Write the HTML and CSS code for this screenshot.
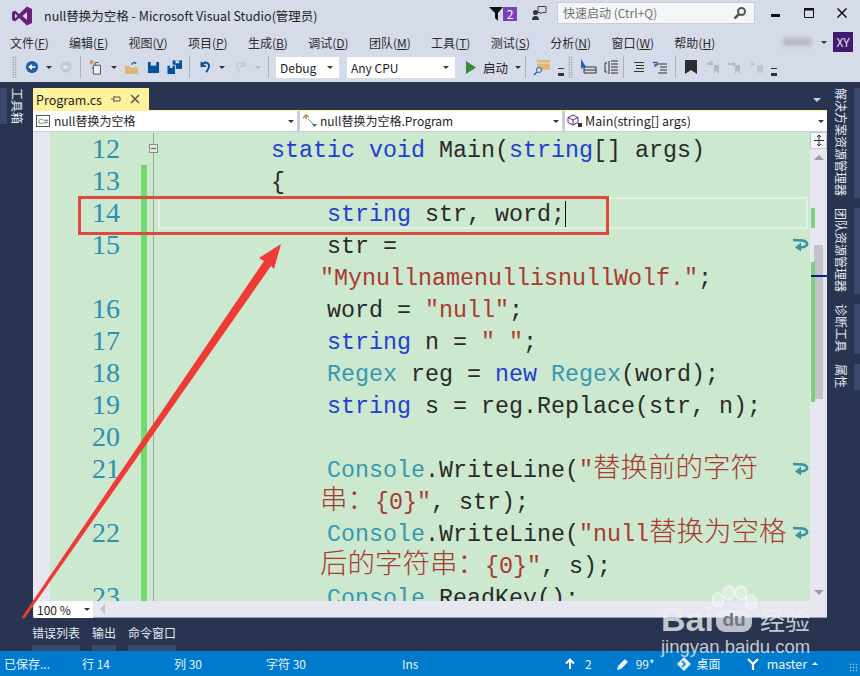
FILE: index.html
```html
<!DOCTYPE html>
<html lang="zh-CN">
<head>
    <meta charset="UTF-8">
    <title>null替换为空格 - Microsoft Visual Studio</title>
    <link rel="stylesheet" href="styles.css">
</head>
<body>
    <!-- Title bar -->
    <div class="titlebar">
        <svg class="vs-logo" width="22" height="20" viewBox="0 0 22 20"><path d="M1 6 L4 4.500 L8 8 L16 0.500 L21 3 L21 17 L16 19.500 L8 12 L4 15.500 L1 14 Z M4 7.500 L4 12.500 L6.500 10 Z M16 6 L11.500 10 L16 14 Z" fill="#68217a" fill-rule="evenodd"/></svg>
        <span class="title">null替换为空格 - Microsoft Visual Studio(管理员)</span>
        <svg class="filter" width="14" height="14" viewBox="0 0 14 14"><path d="M0 0 L14 0 L9 6 L9 14 L6 11 L6 6 Z" fill="#111"/></svg>
        <span class="badge">2</span>
        <svg class="feedback" width="16" height="16" viewBox="0 0 16 16"><circle cx="4.500" cy="7.500" r="2.500" fill="#333"/><path d="M1 15 Q1 11 4.500 11 Q8 11 8 15 Z" fill="#333"/><path d="M7 1.500 H15 V7.500 H11 L9.500 9 V7.500 H7 Z" fill="none" stroke="#444"/></svg>
        <div class="quick"><span>快速启动 (Ctrl+Q)</span>
            <svg width="14" height="14" viewBox="0 0 14 14"><circle cx="8.500" cy="5.500" r="3.500" fill="none" stroke="#555" stroke-width="2"/><path d="M6 8 L1.500 12.500" stroke="#555" stroke-width="2.500"/></svg>
        </div>
        <div class="winctl">
            <svg width="10" height="10" viewBox="0 0 10 10"><rect x="0" y="6" width="9" height="3" fill="#111"/></svg>
            <svg width="10" height="10" viewBox="0 0 10 10"><path d="M0.500 1 H9.500 V9.500 H0.500 Z" fill="none" stroke="#111"/><rect y="0" width="10" height="2.500" fill="#111"/></svg>
            <svg width="10" height="10" viewBox="0 0 10 10"><path d="M0.500 0.500 L9.500 9.500 M9.500 0.500 L0.500 9.500" stroke="#111" stroke-width="1.500"/></svg>
        </div>
    </div>

    <!-- Menu -->
    <div class="menubar">
        <span class="menu">文件(<u>F</u>)</span>
        <span class="menu">编辑(<u>E</u>)</span>
        <span class="menu">视图(<u>V</u>)</span>
        <span class="menu">项目(<u>P</u>)</span>
        <span class="menu">生成(<u>B</u>)</span>
        <span class="menu">调试(<u>D</u>)</span>
        <span class="menu">团队(<u>M</u>)</span>
        <span class="menu">工具(<u>T</u>)</span>
        <span class="menu">测试(<u>S</u>)</span>
        <span class="menu">分析(<u>N</u>)</span>
        <span class="menu">窗口(<u>W</u>)</span>
        <span class="menu">帮助(<u>H</u>)</span>
        <div class="account">
            <span class="blur"></span>
            <span class="caret dark"></span>
            <span class="avatar">XY</span>
        </div>
    </div>

    <!-- Toolbar -->
    <div class="toolbar">
        <span class="grip"></span>
        <svg class="ml1" width="14" height="14" viewBox="0 0 16 16"><circle cx="8" cy="8" r="7" fill="#1e5fa8"/><path d="M12 8 H6 M8 5.500 L5 8 L8 10.500" stroke="#fff" stroke-width="1.800" fill="none"/></svg>
        <span class="caret dark"></span>
        <svg width="14" height="14" viewBox="0 0 16 16"><circle cx="8" cy="8" r="6.500" fill="#c4c8d2"/><path d="M11 8 H6 M8 6 L5.500 8 L8 10" stroke="#e8eaf2" stroke-width="1.500" fill="none"/></svg>
        <span class="sep"></span>
        <svg width="16" height="16" viewBox="0 0 18 18"><path d="M6 7 H14 V17 H6 Z M4 10 H6 M8 7 V4 H12" fill="#eef0f6" stroke="#444"/><path d="M4 1 V6 M1.500 3.500 H6.500 M2 1.500 L6 5.500 M6 1.500 L2 5.500" stroke="#c9932b"/></svg>
        <span class="caret dark"></span>
        <svg width="15" height="15" viewBox="0 0 16 16"><path d="M1 6 H6 L7 8 H15 V15 H1 Z" fill="#dcb67a"/><path d="M8 5 Q10 1 13 4" stroke="#1e5fa8" stroke-width="1.500" fill="none"/></svg>
        <svg class="ml1" width="13" height="13" viewBox="0 0 14 14"><path d="M1 1 H13 V13 H1 Z" fill="#00539c"/><rect x="4" y="1" width="6" height="4" fill="#d6dbe9"/></svg>
        <svg width="15" height="15" viewBox="0 0 16 15"><path d="M6 0 H16 V9 H6 Z" fill="#00539c"/><rect x="9" y="0" width="4" height="3" fill="#d6dbe9"/><path d="M0 5 H9 V15 H0 Z" fill="#00539c" stroke="#d6dbe9"/><rect x="3" y="5" width="3" height="3" fill="#d6dbe9"/></svg>
        <span class="sep"></span>
        <svg class="ml1" width="14" height="16" viewBox="0 0 16 16"><path d="M4 2 V7 H9 M4 7 Q7 1.500 11 3.500 Q15 6 9.500 14" fill="none" stroke="#00539c" stroke-width="2.200"/></svg>
        <span class="caret dark"></span>
        <svg class="ml2" width="14" height="16" viewBox="0 0 16 16"><path d="M12 2 V7 H7 M12 7 Q9 1.500 5 3.500 Q1 6 6.500 14" fill="none" stroke="#c4c8d2" stroke-width="2"/></svg>
        <span class="caret light"></span>
        <span class="sep"></span>
        <div class="combo debug"><span>Debug</span><i class="caret dark"></i></div>
        <div class="combo cpu"><span>Any CPU</span><i class="caret dark"></i></div>
        <svg class="play" width="10" height="13" viewBox="0 0 10 13"><path d="M0 0 L10 6.500 L0 13 Z" fill="#388a34"/></svg>
        <span class="start">启动</span>
        <span class="caret dark"></span>
        <span class="sep mln3"></span>
        <svg width="18" height="18" viewBox="0 0 18 18"><path d="M4 2 H17 V12 H4 Z" fill="#dcb67a"/><path d="M4 5 H17" stroke="#f5e2c0"/><circle cx="6" cy="12" r="2.500" fill="#cfe3f4" stroke="#1e5fa8"/><path d="M4 14 L1 17" stroke="#1e5fa8" stroke-width="1.500"/></svg>
        <span class="more"></span>
        <span class="grip mln3"></span>
        <svg width="17" height="17" viewBox="0 0 17 17"><path d="M1 0 L1 10 L3.500 8 L6 8 Z" fill="#1e5fa8"/><path d="M4 8 H16 V14 H4 Z M4 11 H16" fill="none" stroke="#333"/></svg>
        <svg width="15" height="15" viewBox="0 0 15 15"><path d="M5 1 V14 M1 3 V12 M1 3 H3 M1 12 H3 M7 1 H14 M7 4 H14 M7 7 H14 M7 10 H14 M7 13 H14" stroke="#333" fill="none"/></svg>
        <span class="sep mln3"></span>
        <svg class="ml2" width="12" height="11" viewBox="0 0 12 11"><path d="M1 .5 H11 M3 3.500 H11 M3 6.500 H11 M1 9.500 H11" stroke="#333"/></svg>
        <svg class="ml1" width="15" height="13" viewBox="0 0 15 13"><path d="M5 3 H14 M7 6 H14 M7 9 H14 M5 12 H14" stroke="#333"/><path d="M0 1.500 H4 V4 H2 V6" stroke="#1e5fa8" fill="none" stroke-width="1.300"/></svg>
        <span class="sep"></span>
        <svg class="ml2" width="12" height="14" viewBox="0 0 12 14"><path d="M0 0 H12 V14 L6 10 L0 14 Z" fill="#2d2d30"/></svg>
        <svg class="ml2" width="14" height="13" viewBox="0 0 14 13"><path d="M7 0 V4 H2 L0 2 M8 4 H13 V13 L10 10 L8 13 Z" fill="#b5bac6"/></svg>
        <svg width="14" height="13" viewBox="0 0 14 13"><path d="M1 2 H6 L6 0 L9 3 L6 6 V4 H1 Z M8 4 H13 V13 L10 10 L8 13 Z" fill="#b5bac6"/></svg>
        <svg class="ml2" width="14" height="13" viewBox="0 0 14 13"><path d="M1 0 L5 3 L1 6 Z M7 4 H13 V13 L10 10 L7 13 Z" fill="#c0c5d0"/></svg>
        <span class="more"></span>
    </div>

    <!-- Main area -->
    <div class="main">
        <div class="side left"><span class="vtab">工具箱</span></div>

        <div class="center">
            <div class="tabstrip">
                <div class="doctab">
                    <span>Program.cs</span>
                    <svg width="10" height="10" viewBox="0 0 10 10"><path d="M0 5 H3 M3 2 V8 M3 3 H9 M3 7 H9 M9 3 V7" stroke="#555" fill="none"/></svg>
                    <svg width="10" height="10" viewBox="0 0 10 10"><path d="M1 1 L9 9 M9 1 L1 9" stroke="#555" stroke-width="1.500"/></svg>
                </div>
                <span class="caret pale"></span>
            </div>
            <div class="document">
                <div class="navbar">
                    <div class="navbox first">
                        <svg width="14" height="12" viewBox="0 0 14 12"><rect x=".5" y=".5" width="13" height="11" fill="#fff" stroke="#555"/><text x="2" y="9" font-size="8" font-family="Liberation Sans" fill="#3b7a3b">C#</text></svg>
                        <span>null替换为空格</span><i class="caret dark"></i>
                    </div>
                    <div class="navbox second">
                        <svg width="16" height="14" viewBox="0 0 16 14"><path d="M1 4 L4 1 L7 3 M4 1 L4 5" stroke="#b58a3a" stroke-width="1.500" fill="none"/><path d="M6 5 L12 11" stroke="#888"/><path d="M10 10 H15 L12.500 13 Z" fill="#2a6f8f"/></svg>
                        <span>null替换为空格.Program</span><i class="caret dark"></i>
                    </div>
                    <div class="navbox third">
                        <svg width="16" height="14" viewBox="0 0 16 14"><path d="M6 1 L11 3.500 V8.500 L6 11 L1 8.500 V3.500 Z M1 3.500 L6 6 L11 3.500 M6 6 V11" fill="none" stroke="#68217a"/><rect x="11" y="9" width="4" height="4" fill="#333"/></svg>
                        <span>Main(string[] args)</span><i class="caret dark"></i>
                    </div>
                </div>

                <div class="editor-wrap">
                    <div class="margin"></div>
                    <div class="editor">
                        <div class="row nobar"><span class="num">12</span><span class="chg"></span><span class="code"><i class="fold"></i>        <b>static void</b> Main(<b>string</b>[] args)</span></div>
                        <div class="row"><span class="num">13</span><span class="chg"></span><span class="code">        {</span></div>
                        <div class="row current"><span class="num">14</span><span class="chg"></span><span class="code">            <b>string</b> str, word;<i class="cursor"></i></span></div>
                        <div class="row"><span class="num">15</span><span class="chg"></span><span class="code">            str =<i class="wrap"><svg width="17" height="14" viewBox="0 0 17 14"><path d="M1 2 L11 2.500 Q16 4 15 7 Q13 9.500 7 9.500" fill="none" stroke="#3a8fa8" stroke-width="2.500"/><path d="M9 4.500 L3 9.500 L9 13.500 Z" fill="#3a8fa8"/></svg></i></span></div>
                        <div class="row"><span class="num"></span><span class="chg"></span><span class="code wrapped"><em>"MynullnamenullisnullWolf."</em>;</span></div>
                        <div class="row"><span class="num">16</span><span class="chg"></span><span class="code">            word = <em>"null"</em>;</span></div>
                        <div class="row"><span class="num">17</span><span class="chg"></span><span class="code">            <b>string</b> n = <em>" "</em>;</span></div>
                        <div class="row"><span class="num">18</span><span class="chg"></span><span class="code">            <s>Regex</s> reg = <b>new</b> <s>Regex</s>(word);</span></div>
                        <div class="row"><span class="num">19</span><span class="chg"></span><span class="code">            <b>string</b> s = reg.Replace(str, n);</span></div>
                        <div class="row"><span class="num">20</span><span class="chg"></span><span class="code"></span></div>
                        <div class="row"><span class="num">21</span><span class="chg"></span><span class="code">            <s>Console</s>.WriteLine(<em>"<span class="cjk">替换前的字符</span></em><i class="wrap"><svg width="17" height="14" viewBox="0 0 17 14"><path d="M1 2 L11 2.500 Q16 4 15 7 Q13 9.500 7 9.500" fill="none" stroke="#3a8fa8" stroke-width="2.500"/><path d="M9 4.500 L3 9.500 L9 13.500 Z" fill="#3a8fa8"/></svg></i></span></div>
                        <div class="row"><span class="num"></span><span class="chg"></span><span class="code wrapped"><em><span class="cjk">串：</span>{0}"</em>, str);</span></div>
                        <div class="row"><span class="num">22</span><span class="chg"></span><span class="code">            <s>Console</s>.WriteLine(<em>"null<span class="cjk">替换为空格</span></em><i class="wrap"><svg width="17" height="14" viewBox="0 0 17 14"><path d="M1 2 L11 2.500 Q16 4 15 7 Q13 9.500 7 9.500" fill="none" stroke="#3a8fa8" stroke-width="2.500"/><path d="M9 4.500 L3 9.500 L9 13.500 Z" fill="#3a8fa8"/></svg></i></span></div>
                        <div class="row"><span class="num"></span><span class="chg"></span><span class="code wrapped"><em><span class="cjk">后的字符串：</span>{0}"</em>, s);</span></div>
                        <div class="row"><span class="num">23</span><span class="chg"></span><span class="code">            <s>Console</s>.ReadKey();</span></div>
                    </div>
                    <div class="vscroll">
                        <div class="splitter"><svg width="10" height="13" viewBox="0 0 10 13"><path d="M0 6.500 H10 M5 1 V12 M3 3 L5 1 L7 3 M3 10 L5 12 L7 10" stroke="#333" fill="none"/></svg></div>
                        <span class="tri up"></span>
                        <div class="track">
                            <span class="thumb"></span>
                            <span class="mark m1"></span>
                            <span class="mark m2"></span>
                            <span class="caretline"></span>
                        </div>
                        <span class="tri down"></span>
                    </div>
                </div>

                <div class="hscroll">
                    <div class="zoom"><span>100 %</span><i class="caret dark"></i></div>
                    <span class="tri back"></span>
                </div>
            </div>
            <div class="panels">
                <div class="ptab">错误列表</div>
                <div class="ptab">输出</div>
                <div class="ptab">命令窗口</div>
            </div>
        </div>

        <div class="side right">
            <span class="vtab">解决方案资源管理器</span>
            <span class="vtab">团队资源管理器</span>
            <span class="vtab">诊断工具</span>
            <span class="vtab">属性</span>
        </div>

        <!-- annotation drawn on top of the screenshot -->
        <div class="redbox"></div>
        <svg class="arrow" width="270" height="380" viewBox="0 0 270 380"><path d="M260 3 L238 17 L243 20 L1 376 L3 378 L250 25 L253 28 Z" fill="#ee3b36"/></svg>
    </div>

    <!-- Status bar -->
    <div class="statusbar">
        <span class="st s1">已保存...</span>
        <span class="st s2">行 14</span>
        <span class="st s3">列 30</span>
        <span class="st s4">字符 30</span>
        <span class="st s5">Ins</span>
        <div class="st-right">
            <svg width="10" height="12" viewBox="0 0 10 12"><path d="M5 11 V2 M1 5.500 L5 1.500 L9 5.500" stroke="#fff" stroke-width="2" fill="none"/></svg>
            <span class="p1">2</span>
            <svg width="12" height="12" viewBox="0 0 12 12"><path d="M0 12 L1 8 L8 1 L11 4 L4 11 Z" fill="#e6f2fb"/></svg>
            <span class="p2">99*</span>
            <svg width="16" height="14" viewBox="0 0 16 14"><path d="M8 0 L15 7 L8 14 L1 7 Z" fill="#e6f2fb"/><path d="M6 4 L9 7 L6 10" stroke="#007acc" fill="none" stroke-width="1.500"/></svg>
            <span class="p3">桌面</span>
            <svg width="14" height="14" viewBox="0 0 14 14"><path d="M2 2 L7 7 L12 2 M7 7 V13" stroke="#fff" stroke-width="2.200" fill="none"/></svg>
            <span class="p4">master</span>
            <span class="caret up-white"></span>
            <span class="sgrip"></span>
        </div>
    </div>

    <div class="watermark">
        <svg class="paw" width="50" height="30" viewBox="0 0 50 30"><g fill="rgba(255,255,255,0.3)" stroke="rgba(245,246,250,0.8)" stroke-width="1.500"><ellipse cx="8" cy="15" rx="5.500" ry="7"/><ellipse cx="19" cy="8" rx="5.500" ry="7"/><ellipse cx="31" cy="8" rx="5.500" ry="7"/><ellipse cx="41" cy="17" rx="5.500" ry="7"/></g></svg>
        <div class="wm-top"><span class="wm-bai">Bai</span><span class="wm-du">du</span><span class="wm-jy">经验</span></div>
        <div class="wm-url">jingyan.baidu.com</div>
    </div>
</body>
</html>
```

FILE: styles.css
```css
* {
    margin: 0;
    padding: 0;
    box-sizing: border-box;
}

body {
    width: 860px;
    height: 676px;
    overflow: hidden;
    position: relative;
    display: flex;
    flex-direction: column;
    background: #d6dbe9;
    color: #1e1e1e;
    font-family: "Noto Sans CJK SC", "Noto Sans", sans-serif;
    font-size: 12px;
}

svg {
    display: block;
    flex: none;
}

/* title bar */
.titlebar {
    height: 31px;
    flex: none;
    display: flex;
    align-items: center;
    padding-left: 11px;
}

.title {
    margin-left: 11px;
    margin-top: -1px;
    width: 445px;
    font-size: 12.500px;
    white-space: nowrap;
}

.filter {
    margin-top: -4px;
}

.badge {
    width: 14px;
    height: 14px;
    margin-top: -3px;
    background: #7c3fb8;
    color: #fff;
    line-height: 14px;
    text-align: center;
}

.feedback {
    margin-left: 14px;
    margin-top: -5px;
}

.quick {
    width: 198px;
    height: 22px;
    margin-left: 10px;
    margin-top: -6px;
    padding: 0 7px 0 5px;
    background: #f5f6fa;
    border: 1px solid #c8cddb;
    color: #717171;
    display: flex;
    align-items: center;
    justify-content: space-between;
}

.winctl {
    display: flex;
    gap: 23px;
    margin-left: 16px;
    margin-top: -5px;
}

/* menu */
.menubar {
    height: 22px;
    flex: none;
    display: flex;
    align-items: center;
    padding-left: 10px;
    gap: 20.300px;
}

.menu {
    white-space: nowrap;
    color: #2b2b2b;
}

.account {
    display: flex;
    align-items: center;
    margin-left: auto;
    margin-right: 7px;
}

.blur {
    width: 30px;
    height: 8px;
    background: #b4b8c2;
    border-radius: 4px;
    filter: blur(2px);
}

.account .caret {
    margin-left: 9px;
}

.avatar {
    width: 20px;
    height: 20px;
    margin-left: 6px;
    background: #3f1a6e;
    color: #e8e0f0;
    line-height: 20px;
    text-align: center;
}

/* toolbar */
.toolbar {
    height: 29px;
    flex: none;
    display: flex;
    align-items: center;
    padding: 0 0 1px 12px;
    gap: 7px;
}

.ml1 {
    margin-left: 1px;
}

.ml2 {
    margin-left: 2px;
}

.mln3 {
    margin-left: -3px;
}

.grip {
    width: 5px;
    height: 22px;
    background: radial-gradient(#8a8f9c 40%, transparent 50%) 0 0 / 2.500px 2.500px;
}

.sep {
    width: 1px;
    height: 22px;
    background: #aab0be;
}

.caret {
    display: inline-block;
    flex: none;
    width: 0;
    height: 0;
    border-left: 3px solid transparent;
    border-right: 3px solid transparent;
    border-top: 3px solid #333;
}

.caret.light {
    border-top-color: #b5bac6;
}

.caret.pale {
    border-top-color: #cbd2e2;
    border-left-width: 4px;
    border-right-width: 4px;
    border-top-width: 4px;
}

.caret.up-white {
    border-top: 0;
    border-bottom: 3px solid #fff;
    margin-left: 5px;
}

.combo {
    height: 21px;
    background: #fff;
    display: flex;
    align-items: center;
    justify-content: space-between;
    padding: 0 6px 0 4px;
}

.debug {
    width: 63px;
}

.cpu {
    width: 108px;
    margin-left: 1px;
}

.play {
    margin-left: 4px;
}

.start {
    font-size: 12.500px;
}

.more {
    width: 6px;
    height: 8px;
    margin-top: 10px;
    border-top: 1px solid #333;
    border-bottom: 3px solid #333;
}

/* main */
.main {
    flex: 1;
    min-height: 0;
    display: flex;
    position: relative;
    background: #293550;
}

.side {
    width: 33px;
    flex: none;
    display: flex;
    flex-direction: column;
    padding-top: 6px;
    gap: 10px;
}

.vtab {
    writing-mode: vertical-rl;
    text-orientation: sideways;
    color: #e6e9f2;
    white-space: nowrap;
}

.left .vtab {
    width: 28px;
    padding-right: 1px;
    border-left: 7px solid #3b4a6b;
    line-height: 19px;
}

.right .vtab {
    width: 27px;
    margin-left: 6px;
    padding: 0 5px 2px 0;
    border-right: 6px solid #3b4a6b;
    line-height: 15px;
}

.center {
    flex: 1;
    min-width: 0;
    display: flex;
    flex-direction: column;
}

.tabstrip {
    height: 28px;
    flex: none;
    padding-top: 6px;
    display: flex;
    justify-content: space-between;
}

.tabstrip .caret {
    margin: 10px 6px 0 0;
}

.doctab {
    width: 116px;
    height: 22px;
    background: #fff29d;
    display: flex;
    align-items: center;
    padding-left: 3px;
    font-size: 12.500px;
}

.doctab span {
    width: 79px;
}

.doctab svg {
    margin-right: 9px;
}

.document {
    height: 508px;
    flex: none;
    display: flex;
    flex-direction: column;
    background: #e6e7f0;
    border-top: 1px solid #fff29d;
}

.navbar {
    height: 20px;
    flex: none;
    display: flex;
    gap: 3px;
    background: #c9cede;
}

.navbox {
    background: #fff;
    display: flex;
    align-items: center;
    gap: 2px;
    padding: 0 2px;
    position: relative;
    white-space: nowrap;
}

.navbox span {
    margin-top: -1px;
}

.navbox .caret {
    position: absolute;
    right: 3px;
    top: 9px;
}

.first {
    width: 264px;
    gap: 4px;
    padding-left: 3px;
}

.second {
    width: 262px;
}

.third {
    flex: 1;
    font-size: 12.500px;
}

.editor-wrap {
    flex: 1;
    min-height: 0;
    display: flex;
    border-top: 1px solid #c9cede;
}

.margin {
    width: 17px;
    flex: none;
}

.editor {
    flex: 1;
    min-width: 0;
    overflow: hidden;
    padding-top: 1px;
    background: #cce8cf;
    font-family: "Liberation Mono", monospace;
    font-size: 23.330px;
    line-height: 32px;
    color: #2a2a2a;
}

.row {
    height: 32px;
    display: flex;
}

.num {
    width: 70px;
    flex: none;
    text-align: right;
    color: #2b91af;
    font-family: "Liberation Serif", serif;
    font-size: 28px;
}

.chg {
    width: 6px;
    flex: none;
    margin-left: 21px;
    background: #6fdb6f;
}

.nobar .chg {
    background: none;
}

.code {
    flex: 1;
    position: relative;
    margin-left: 6px;
    padding: 2px 0 0 5px;
    border-left: 1px solid #9aa59c;
    white-space: pre;
}

.code b {
    font-weight: normal;
    color: #1f3fcf;
}

.code em {
    font-style: normal;
    color: #a83a30;
}

.code s {
    text-decoration: none;
    color: #3a97b0;
}

.cjk {
    font-family: "Noto Sans CJK SC", sans-serif;
    font-size: 27.500px;
    font-weight: 300;
    line-height: 0;
}

.wrapped {
    padding-left: 166px;
}

.current .code::before {
    content: "";
    position: absolute;
    left: 4px;
    right: 2px;
    top: 0;
    bottom: 0;
    border: 2px solid #e4efe6;
}

.cursor {
    display: inline-block;
    width: 1px;
    height: 26px;
    vertical-align: -6px;
    background: #111;
}

.fold {
    position: absolute;
    left: -5px;
    top: 11px;
    width: 9px;
    height: 9px;
    border: 1px solid #8a8f8a;
    background: linear-gradient(#666, #666) center / 5px 1px no-repeat #dfe7df;
}

.wrap {
    position: absolute;
    right: 1px;
    top: 9px;
}

.vscroll {
    width: 17px;
    flex: none;
    display: flex;
    flex-direction: column;
    align-items: center;
    background: #e6e7f0;
}

.splitter {
    width: 17px;
    height: 17px;
    background: #f5f6fa;
    border: 1px solid #c2c7d6;
    display: flex;
    align-items: center;
    justify-content: center;
}

.tri {
    flex: none;
    width: 0;
    height: 0;
    border-left: 5px solid transparent;
    border-right: 5px solid transparent;
}

.tri.up {
    margin-top: 6px;
    border-bottom: 5px solid #9a9ea8;
}

.tri.down {
    margin-bottom: 6px;
    border-top: 5px solid #9a9ea8;
}

.tri.back {
    margin-left: 7px;
    border: 0 solid transparent;
    border-top-width: 5px;
    border-bottom-width: 5px;
    border-right: 5px solid #c2c5d0;
}

.track {
    flex: 1;
    width: 17px;
    position: relative;
}

.thumb {
    position: absolute;
    left: 4px;
    top: 85px;
    width: 9px;
    height: 154px;
    background: #c2c3c9;
}

.mark {
    position: absolute;
    left: 1px;
    width: 4px;
    background: #7dd17d;
}

.m1 {
    top: 48px;
    height: 20px;
}

.m2 {
    top: 102px;
    height: 140px;
}

.caretline {
    position: absolute;
    left: 1px;
    right: 0;
    top: 115px;
    height: 2px;
    background: #0a1f80;
}

.hscroll {
    height: 17px;
    flex: none;
    display: flex;
    align-items: center;
    border-bottom: 1px solid #9ba0ad;
}

.zoom {
    width: 59px;
    height: 17px;
    margin-left: 1px;
    background: #fff;
    display: flex;
    align-items: center;
    justify-content: space-between;
    padding: 0 3px;
}

.panels {
    flex: 1;
    display: flex;
    gap: 12px;
    margin-left: -1px;
    padding-top: 6px;
}

.ptab {
    height: 27px;
    color: #e6e9f2;
    border-bottom: 6px solid #3b4a6b;
}

/* annotation */
.redbox {
    position: absolute;
    left: 78px;
    top: 114px;
    width: 531px;
    height: 39px;
    border: 3px solid #e0473f;
}

.arrow {
    position: absolute;
    left: 21px;
    top: 159px;
}

/* status bar */
.statusbar {
    height: 25px;
    flex: none;
    display: flex;
    align-items: center;
    background: #007acc;
    color: #e6f2fb;
}

.st {
    white-space: nowrap;
}

.s1 {
    width: 82px;
    padding-left: 4px;
}

.s2 {
    width: 92px;
}

.s3 {
    width: 92px;
}

.s4 {
    width: 136px;
}

.s5 {
    width: 163px;
}

.st-right {
    flex: 1;
    display: flex;
    align-items: center;
}

.p1 {
    margin: 0 25px 0 10px;
}

.p2 {
    margin: 0 21px 0 7px;
}

.p3 {
    margin: 0 25px 0 5px;
}

.p4 {
    margin-left: 7px;
    font-size: 12.500px;
}

.sgrip {
    width: 9px;
    height: 9px;
    margin: 8px 2px 0 auto;
    background: radial-gradient(#8cc4ea 40%, transparent 50%) 0 0 / 3px 3px;
}

/* watermark */
.watermark {
    position: absolute;
    left: 660px;
    top: 585px;
    width: 160px;
    height: 72px;
    color: rgba(238, 240, 244, 0.8);
    font-family: "Liberation Sans", sans-serif;
}

.paw {
    position: absolute;
    left: 50px;
    top: 0;
}

.wm-top {
    position: absolute;
    top: 20px;
    left: 1px;
    display: flex;
    align-items: center;
    white-space: nowrap;
}

.wm-bai {
    width: 55px;
    font-size: 34px;
    font-weight: bold;
    line-height: 28px;
}

.wm-du {
    width: 36px;
    height: 22px;
    margin-top: 3px;
    border-radius: 9px;
    background: rgba(238, 240, 244, 0.75);
    color: #6f7788;
    font-size: 19px;
    font-weight: bold;
    line-height: 20px;
    text-align: center;
}

.wm-jy {
    margin-left: 8px;
    font-family: "Noto Sans CJK SC", sans-serif;
    font-size: 25px;
    line-height: 28px;
}

.wm-url {
    position: absolute;
    top: 51px;
    left: 1px;
    font-size: 18.500px;
    line-height: 21px;
    white-space: nowrap;
}
```
